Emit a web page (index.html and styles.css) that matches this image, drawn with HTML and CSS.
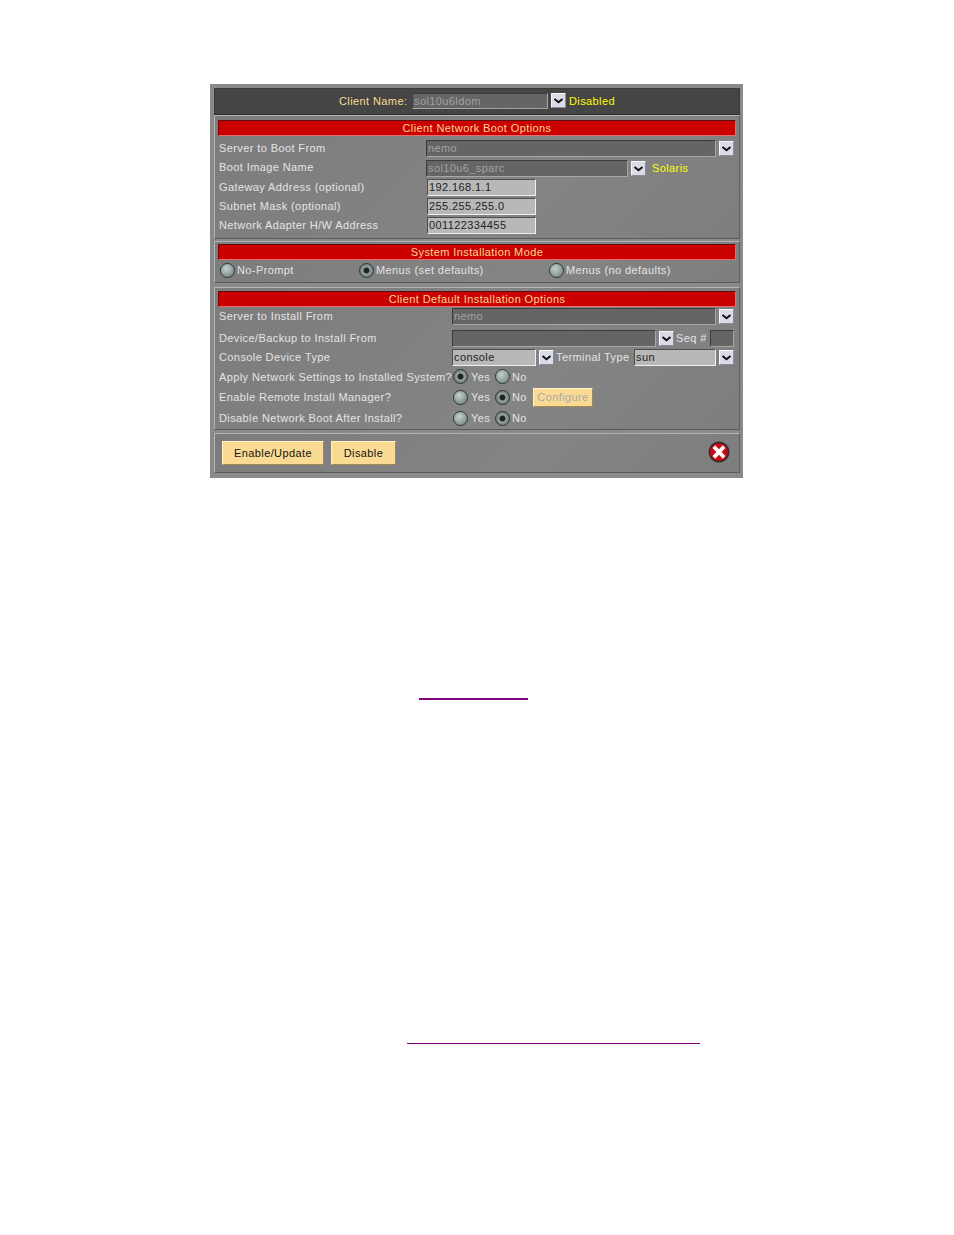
FILE: index.html
```html
<!DOCTYPE html>
<html lang="en">
<head>
  <meta charset="UTF-8">
  <title>Client Network Boot</title>
  <link rel="stylesheet" href="styles.css">
</head>
<body>
  <svg width="0" height="0" class="defs">
    <symbol id="chev" viewBox="0 0 13 13">
      <path d="M2.5 5 L6.5 8.2 L10.5 5" fill="none" stroke="#111" stroke-width="2"/>
    </symbol>
  </svg>

  <div class="dialog">
    <div class="panel head">
      <span class="head-label">Client Name:</span>
      <span class="field off w-name">sol10u6ldom</span>
      <button class="drop"><svg><use href="#chev"/></svg></button>
      <span class="status">Disabled</span>
    </div>

    <div class="panel boot">
      <div class="bar">Client Network Boot Options</div>
      <div class="row r1">
        <label class="lab-a">Server to Boot From</label>
        <span class="field off w-long">nemo</span>
        <button class="drop"><svg><use href="#chev"/></svg></button>
      </div>
      <div class="row r2">
        <label class="lab-a">Boot Image Name</label>
        <span class="field off w-image">sol10u6_sparc</span>
        <button class="drop"><svg><use href="#chev"/></svg></button>
        <span class="status solaris">Solaris</span>
      </div>
      <div class="row r3">
        <label class="lab-a">Gateway Address (optional)</label>
        <span class="field on w-ip">192.168.1.1</span>
      </div>
      <div class="row r3">
        <label class="lab-a">Subnet Mask (optional)</label>
        <span class="field on w-ip">255.255.255.0</span>
      </div>
      <div class="row r3">
        <label class="lab-a">Network Adapter H/W Address</label>
        <span class="field on w-ip">001122334455</span>
      </div>
    </div>

    <div class="panel mode">
      <div class="bar">System Installation Mode</div>
      <div class="mode-row">
        <span class="opt m1"><i class="radio"></i>No-Prompt</span>
        <span class="opt m2"><i class="radio sel"></i>Menus (set defaults)</span>
        <span class="opt"><i class="radio"></i>Menus (no defaults)</span>
      </div>
    </div>

    <div class="panel install">
      <div class="bar">Client Default Installation Options</div>
      <div class="row i1">
        <label class="lab-b">Server to Install From</label>
        <span class="field off w-server">nemo</span>
        <button class="drop"><svg><use href="#chev"/></svg></button>
      </div>
      <div class="row i2">
        <label class="lab-b">Device/Backup to Install From</label>
        <span class="field off w-device"></span>
        <button class="drop"><svg><use href="#chev"/></svg></button>
        <span class="seq">Seq #</span>
        <span class="field off w-seq"></span>
      </div>
      <div class="row i3">
        <label class="lab-b">Console Device Type</label>
        <span class="field on w-console">console</span>
        <button class="drop"><svg><use href="#chev"/></svg></button>
        <span class="term">Terminal Type</span>
        <span class="field on w-term">sun</span>
        <button class="drop"><svg><use href="#chev"/></svg></button>
      </div>
      <div class="row i4">
        <label class="lab-b">Apply Network Settings to Installed System?</label>
        <span class="opt yes"><i class="radio sel"></i>Yes</span>
        <span class="opt no"><i class="radio"></i>No</span>
      </div>
      <div class="row i5">
        <label class="lab-b">Enable Remote Install Manager?</label>
        <span class="opt yes"><i class="radio"></i>Yes</span>
        <span class="opt no"><i class="radio sel"></i>No</span>
        <button class="btn config">Configure</button>
      </div>
      <div class="row i5">
        <label class="lab-b">Disable Network Boot After Install?</label>
        <span class="opt yes"><i class="radio"></i>Yes</span>
        <span class="opt no"><i class="radio sel"></i>No</span>
      </div>
    </div>

    <div class="panel actions">
      <button class="btn big">Enable/Update</button>
      <button class="btn small">Disable</button>
      <svg class="close" width="22" height="22" viewBox="0 0 22 22">
        <circle cx="11" cy="11" r="10.5" fill="#3a2a2a"/>
        <circle cx="11" cy="11" r="8.8" fill="#cc0a14"/>
        <path d="M7.2 7 L14.8 15 M14.8 7 L7.2 15" stroke="#fff" stroke-width="3.8" stroke-linecap="square"/>
      </svg>
    </div>
  </div>

  <div class="rule rule-one"></div>
  <div class="rule rule-two"></div>
</body>
</html>
```

FILE: styles.css
```css
* {
  box-sizing: border-box;
}

html,
body {
  margin: 0;
  background: #fff;
}

body {
  width: 954px;
  height: 1235px;
  padding-top: 84px;
  font-family: "Liberation Sans", Arial, sans-serif;
  font-size: 11px;
  letter-spacing: 0.4px;
  color: #e4e4e4;
}

.defs {
  position: absolute;
}

.dialog {
  width: 533px;
  height: 394px;
  margin-left: 210px;
  padding: 4px 3px 5px 4px;
  background: #8a8a8a;
  display: flex;
  flex-direction: column;
}

.panel {
  width: 526px;
  background: linear-gradient(135deg, #7c7c7c, #848484 60%, #7e7e7e);
  border: 1px solid #5a5a5a;
  border-top-color: #b4b4b4;
  border-left-color: #b4b4b4;
}

.head {
  height: 27px;
  padding: 0 0 2px 124px;
  display: flex;
  align-items: center;
  background-color: #454545;
  background-image: radial-gradient(#565656 0.5px, transparent 0.7px);
  background-size: 13px 9px;
  border: 1px solid #3a3a3a;
  border-bottom-color: #2e2e2e;
}

.head-label {
  width: 73px;
  color: #f7dd8c;
}

.status {
  margin-left: 3px;
  color: #ffff00;
}

.boot {
  height: 124px;
  padding: 4px 3px 0;
}

.mode {
  height: 42px;
  margin-top: 2px;
  padding: 2px 3px 0;
}

.install {
  height: 143px;
  margin-top: 4px;
  padding: 3px 3px 0;
}

.actions {
  height: 40px;
  margin-top: 3px;
  padding: 7px 0 0 7px;
  display: flex;
  align-items: flex-start;
  gap: 7px;
  position: relative;
}

.bar {
  width: 518px;
  height: 16px;
  background: #cc0000;
  border: 1px solid #e86a6a;
  border-top-color: #5a1010;
  border-left-color: #5a1010;
  color: #f8d890;
  text-align: center;
  line-height: 14px;
}

.row {
  display: flex;
  align-items: center;
  padding-left: 1px;
}

.r1 { height: 20px; margin-top: 2px; }
.r2 { height: 20px; }
.r3 { height: 19px; }

.lab-a { width: 207px; }
.lab-b { width: 233px; white-space: nowrap; }

.r2 .lab-a,
.r3 .lab-a {
  padding-bottom: 2px;
}

.field {
  height: 17px;
  padding-left: 1px;
  line-height: 15px;
  border: 1px solid;
  overflow: hidden;
  white-space: nowrap;
}

.field.off {
  background: #656565;
  border-color: #3c3c3c #a6a6a6 #a6a6a6 #3c3c3c;
  color: #a2a2a2;
}

.field.on {
  background: #b8b8b8;
  border-color: #4e4e4e #f0f0f0 #f0f0f0 #4e4e4e;
  color: #222;
}

.w-name { width: 136px; height: 16px; line-height: 14px; }
.w-long { width: 290px; }
.w-image { width: 202px; }
.w-ip { width: 109px; margin-left: 1px; }
.w-server { width: 264px; }
.w-device { width: 204px; }
.w-seq { width: 24px; margin-left: 2px; }
.w-console { width: 84px; }
.w-term { width: 82px; }

.drop {
  width: 15px;
  height: 15px;
  margin-left: 3px;
  padding: 0;
  flex: none;
  background: #dcdce8;
  border: 1px solid;
  border-color: #f6f6fc #8a8a98 #8a8a98 #f6f6fc;
}

.drop svg {
  display: block;
  width: 13px;
  height: 13px;
}

.solaris {
  margin-left: 6px;
}

.seq {
  width: 32px;
  margin-left: 2px;
  white-space: nowrap;
}

.term {
  width: 78px;
  margin-left: 2px;
  white-space: nowrap;
}

.mode-row {
  display: flex;
  align-items: center;
  height: 20px;
  padding-left: 2px;
}

.opt {
  display: flex;
  align-items: center;
  gap: 2px;
}

.m1 { width: 139px; }
.m2 { width: 190px; }

.radio {
  display: block;
  width: 15px;
  height: 15px;
  flex: none;
  border-radius: 50%;
  border: 1px solid #2c3838;
  background: radial-gradient(circle at 40% 35%, #c4d0ce, #7a8a88 80%);
}

.radio.sel {
  background: radial-gradient(circle, #1e2424 0 2.5px, #9aa6a4 3.5px, #5f6b6a 85%);
}

.i1 { height: 18px; }
.i2 { height: 18px; margin-top: 4px; }
.i3 { height: 18px; margin-top: 1px; }
.i4 { height: 19px; margin-top: 1px; }
.i5 { height: 20px; margin-top: 1px; }

.yes { width: 42px; margin-left: 1px; gap: 3px; }
.no { width: 32px; }

.btn {
  padding: 0;
  background: #fbdb94;
  border: 1px solid;
  border-color: #fff3d0 #a08a50 #a08a50 #fff3d0;
  font-family: inherit;
  font-size: 11px;
  letter-spacing: 0.4px;
  color: #111;
}

.config {
  width: 60px;
  height: 19px;
  margin-left: 6px;
  color: #a8a8a8;
}

.big {
  width: 102px;
  height: 24px;
}

.small {
  width: 65px;
  height: 24px;
}

.close {
  position: absolute;
  right: 9px;
  top: 7px;
}

.rule {
  position: absolute;
  background: #800080;
}

.rule-one {
  left: 419px;
  top: 698px;
  width: 109px;
  height: 2px;
}

.rule-two {
  left: 407px;
  top: 1043px;
  width: 293px;
  height: 1px;
}
```
